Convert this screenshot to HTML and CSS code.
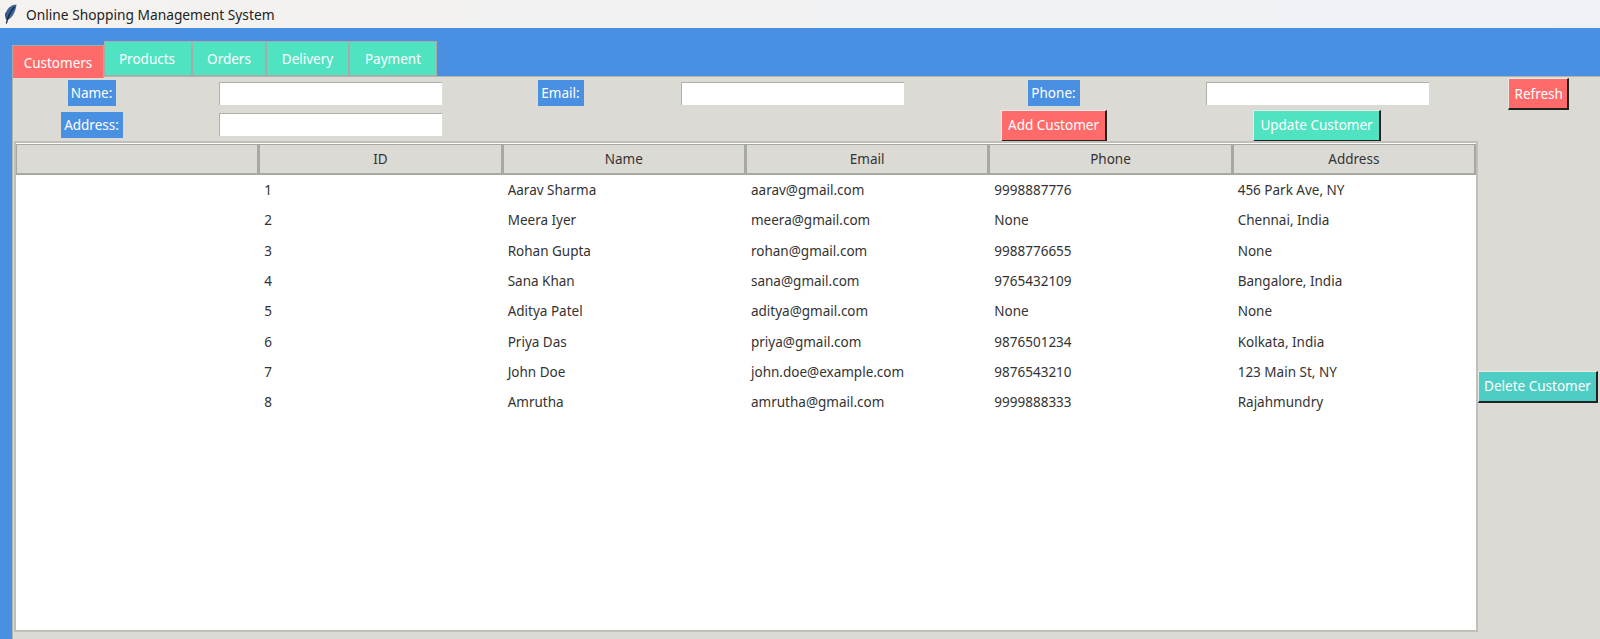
FILE: index.html
```html
<!DOCTYPE html>
<html lang="en">

<head>
    <meta charset="UTF-8">
    <meta name="viewport" content="width=device-width, initial-scale=1.0">
    <title>Online Shopping Management System</title>
    <link rel="stylesheet" href="styles.css">
</head>

<body>
    <div class="titlebar">
        <svg class="feather" width="12" height="20" viewBox="0 0 12 20">
            <path d="M11.500 0.500 C7 0.500 2.500 3.500 1 8.500 C0.300 11 0.800 14 2 16 C6.500 15 10.500 8.500 11.500 0.500 Z" fill="#3a6496" />
            <path d="M9.500 3 C6.500 6 3.800 10.500 2.500 15.500 L1.300 19.500" fill="none" stroke="#14233c" stroke-width="1.200" />
            <path d="M1 8.500 C0.300 11 0.800 14 2 16" fill="none" stroke="#1d2f4d" stroke-width="1" />
        </svg>
        <span>Online Shopping Management System</span>
    </div>

    <div class="tabs">
        <div class="tab tab-active">Customers</div>
        <div class="tab tab-products">Products</div>
        <div class="tab tab-orders">Orders</div>
        <div class="tab tab-delivery">Delivery</div>
        <div class="tab tab-payment">Payment</div>
    </div>

    <div class="panel">
        <div class="cell"><label class="field-label">Name:</label></div>
        <div class="cell"><input class="entry" type="text"></div>
        <div class="cell"><label class="field-label">Email:</label></div>
        <div class="cell"><input class="entry" type="text"></div>
        <div class="cell"><label class="field-label">Phone:</label></div>
        <div class="cell"><input class="entry" type="text"></div>
        <div class="cell"><button class="btn btn-red btn-refresh">Refresh</button></div>

        <div class="cell"><label class="field-label">Address:</label></div>
        <div class="cell"><input class="entry" type="text"></div>
        <div class="cell"></div>
        <div class="cell"></div>
        <div class="cell"><button class="btn btn-red">Add Customer</button></div>
        <div class="cell"><button class="btn btn-green">Update Customer</button></div>
        <div class="cell"></div>

        <div class="table-wrap">
            <table class="customers">
                <thead>
                    <tr>
                        <th></th>
                        <th>ID</th>
                        <th>Name</th>
                        <th>Email</th>
                        <th>Phone</th>
                        <th>Address</th>
                    </tr>
                </thead>
                <tbody>
                    <tr><td></td><td>1</td><td>Aarav Sharma</td><td>aarav@gmail.com</td><td>9998887776</td><td>456 Park Ave, NY</td></tr>
                    <tr><td></td><td>2</td><td>Meera Iyer</td><td>meera@gmail.com</td><td>None</td><td>Chennai, India</td></tr>
                    <tr><td></td><td>3</td><td>Rohan Gupta</td><td>rohan@gmail.com</td><td>9988776655</td><td>None</td></tr>
                    <tr><td></td><td>4</td><td>Sana Khan</td><td>sana@gmail.com</td><td>9765432109</td><td>Bangalore, India</td></tr>
                    <tr><td></td><td>5</td><td>Aditya Patel</td><td>aditya@gmail.com</td><td>None</td><td>None</td></tr>
                    <tr><td></td><td>6</td><td>Priya Das</td><td>priya@gmail.com</td><td>9876501234</td><td>Kolkata, India</td></tr>
                    <tr><td></td><td>7</td><td>John Doe</td><td>john.doe@example.com</td><td>9876543210</td><td>123 Main St, NY</td></tr>
                    <tr><td></td><td>8</td><td>Amrutha</td><td>amrutha@gmail.com</td><td>9999888333</td><td>Rajahmundry</td></tr>
                </tbody>
            </table>
        </div>
        <div class="cell"><button class="btn btn-teal">Delete Customer</button></div>
    </div>
</body>

</html>
```
FILE: styles.css
```css
* {
    box-sizing: border-box;
}

html,
body {
    height: 100%;
}

body {
    margin: 0;
    display: flex;
    flex-direction: column;
    overflow: hidden;
    background-color: #4a90e2;
    font-family: "Noto Sans", Arial, sans-serif;
    font-size: 13.500px;
    color: #333;
}

.titlebar {
    height: 28px;
    flex: none;
    display: flex;
    align-items: center;
    gap: 9px;
    padding-left: 5px;
    background: linear-gradient(to right, #f5f2ef, #eef2f7);
    color: #222;
    font-size: 13.750px;
}

/* tabs */
.tabs {
    height: 50px;
    flex: none;
    display: flex;
    align-items: flex-start;
    padding: 13px 0 0 12px;
    margin-bottom: -2px;
    position: relative;
    z-index: 1;
}

.tab {
    height: 35px;
    display: flex;
    align-items: center;
    justify-content: center;
    background-color: #50e3c2;
    border: 1px solid #a9aca6;
    color: #fff;
}

.tab-active {
    width: 92px;
    height: 33px;
    margin-top: 4px;
    padding-top: 1px;
    background-color: #ff6b6b;
    border-bottom: none;
}

.tab-products {
    width: 88px;
    padding-right: 2px;
}

.tab-orders {
    width: 74px;
}

.tab-delivery {
    width: 83px;
}

.tab-payment {
    width: 88px;
}

/* main panel */
.panel {
    flex: 1;
    min-height: 0;
    margin-left: 12px;
    padding: 1px 0 7px;
    display: grid;
    grid-template-columns: 158px 318px 144px 318px 206px 320px 122px;
    grid-template-rows: 32px 31px minmax(0, 1fr);
    background-color: #dcdad5;
    border-top: 1px solid #b4b4ae;
    border-left: 1px solid #b4b4ae;
}

.cell {
    display: flex;
    align-items: center;
    justify-content: center;
}

.field-label {
    height: 26px;
    margin-bottom: 2px;
    display: flex;
    align-items: center;
    padding: 0 4px 0 3px;
    background-color: #4a90e2;
    color: #fff;
}

.entry {
    width: 223px;
    height: 23px;
    margin-bottom: 2px;
    padding: 0;
    background-color: #fff;
    border: none;
    border-top: 1px solid #b0b0aa;
    border-left: 1px solid #b0b0aa;
}

.btn {
    height: 32px;
    padding: 0 6px;
    font: inherit;
    color: #fff;
    border-style: solid;
    border-width: 1px 2px 2px 1px;
    border-color: #e9e9e5 #222 #222 #e9e9e5;
}

.btn-refresh {
    width: 61px;
}

.btn-red {
    background-color: #ff6b6b;
}

.btn-green {
    background-color: #50e3c2;
}

.btn-teal {
    width: 120px;
    padding: 0;
    background-color: #4ecdc4;
}

/* customers table */
.table-wrap {
    grid-column: 1 / 7;
    margin: 0 -1px 0 1px;
    padding-top: 1px;
    background-color: #fff;
    border: 2px solid #c0bfb9;
}

.customers {
    display: block;
    width: 100%;
}

.customers thead,
.customers tbody {
    display: block;
}

.customers tr {
    display: grid;
    grid-template-columns: repeat(6, 1fr);
}

.customers th {
    height: 31px;
    padding: 0;
    display: flex;
    align-items: center;
    justify-content: center;
    font-weight: normal;
    background-color: #dcdad5;
    border: 1px solid #a8a8a2;
    border-right-width: 2px;
    border-bottom-width: 2px;
}

.customers tbody tr {
    height: 30.300px;
}

.customers td {
    padding: 0 0 0 5px;
    display: flex;
    align-items: center;
}
```
